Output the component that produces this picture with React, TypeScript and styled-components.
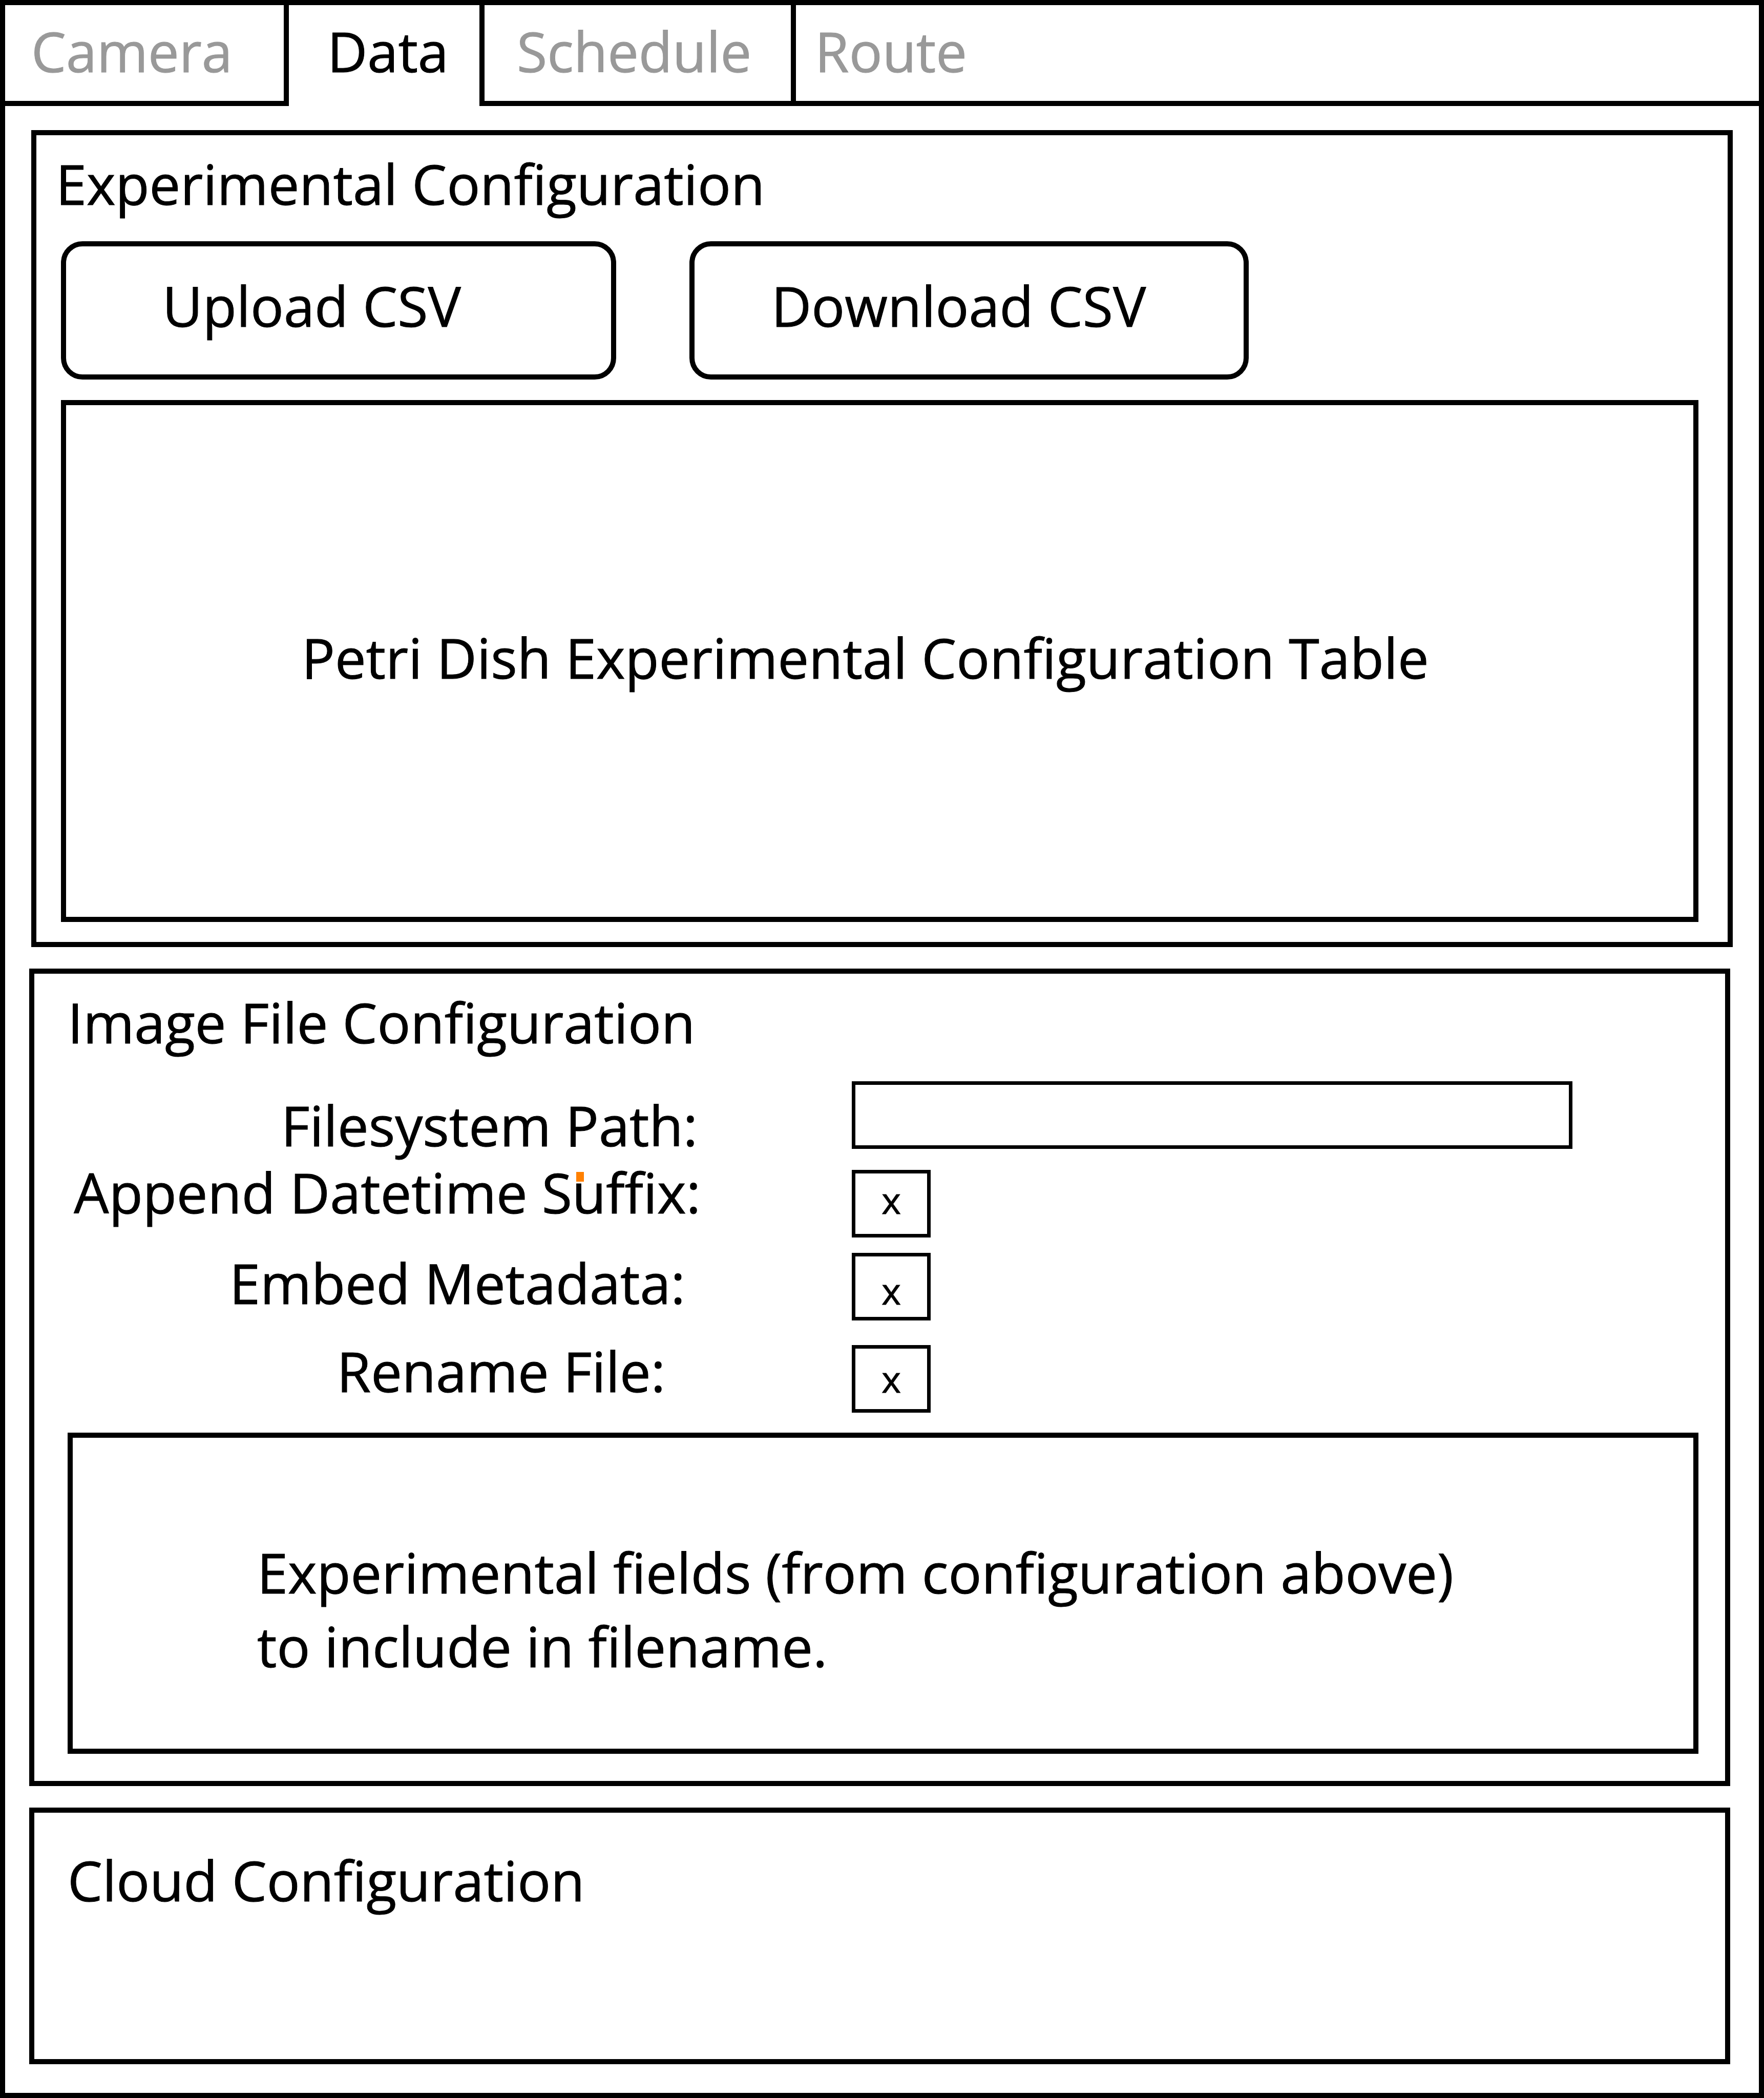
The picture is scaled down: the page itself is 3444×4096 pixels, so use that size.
import React from "react";
import styled, { createGlobalStyle } from "styled-components";

const GlobalStyle = createGlobalStyle`
  *, *::before, *::after { box-sizing: border-box; }
  body { margin: 0; background: #fff; }
  body, button, input {
    font-family: "Open Sans", "Noto Sans", sans-serif;
    font-size: 108px;
    font-weight: 400;
    line-height: 144px;
    color: #000;
    -webkit-text-stroke: 1px currentColor;
  }
`;

const Frame = styled.div`
  display: flex;
  flex-direction: column;
  min-height: 100vh;
  border: 10px solid #000;
`;

const TabBar = styled.nav`
  display: flex;
  height: 197px;
`;

const Tab = styled.button<{ $width?: number; $indent: number; $active?: boolean }>`
  flex: ${(p) => (p.$width ? `0 0 ${p.$width}px` : "1")};
  display: flex;
  align-items: flex-start;
  margin: 0;
  padding: 18px 0 0 ${(p) => p.$indent}px;
  border: 0 solid #000;
  border-right-width: ${(p) => (p.$width ? 10 : 0)}px;
  border-bottom-width: ${(p) => (p.$active ? 0 : 10)}px;
  background: none;
  color: ${(p) => (p.$active ? "#000" : "#999")};
  text-align: left;
`;

const Main = styled.main`
  flex: 1;
  display: flex;
  flex-direction: column;
  gap: 42px;
  padding: 47px 51px 56px;
`;

const Panel = styled.section`
  border: 10px solid #000;
  padding: 23px 57px 39px 48px;
`;

const OffsetPanel = styled(Panel)`
  margin: 0 5px 0 -4px;
  padding: 23px 52px 53px 65px;
`;

const CloudPanel = styled(OffsetPanel)`
  flex: 1;
  padding-top: 60px;
`;

const Title = styled.h2<{ $outdent?: boolean }>`
  margin: 0 0 ${(p) => (p.$outdent ? 40 : 43)}px ${(p) => (p.$outdent ? -10 : 0)}px;
  font-size: 108px;
  font-weight: 400;
  line-height: 144px;
`;

const Actions = styled.div`
  display: flex;
  gap: 143px;
  margin-bottom: 40px;
`;

const ActionButton = styled.button<{ $width: number; $indent: number }>`
  width: ${(p) => p.$width}px;
  height: 270px;
  padding: 0 0 18px ${(p) => p.$indent}px;
  border: 10px solid #000;
  border-radius: 42px;
  background: none;
  text-align: left;
`;

const TableArea = styled.div`
  display: flex;
  align-items: center;
  height: 1019px;
  padding: 0 0 14px 460px;
  border: 10px solid #000;
`;

const FieldsArea = styled.div`
  height: 627px;
  padding: 191px 0 0 360px;
  border: 10px solid #000;
`;

const FieldRow = styled.div<{ $gap: number }>`
  display: grid;
  grid-template-columns: 1531px 1fr;
  align-items: start;
  height: 132px;
  margin: 0 246px ${(p) => p.$gap}px 0;
`;

const FieldLabel = styled.label<{ $drop: number; $inset: number }>`
  padding: ${(p) => p.$drop}px ${(p) => p.$inset}px 0 0;
  line-height: 88px;
  text-align: right;
  white-space: nowrap;
`;

const PathInput = styled.input`
  width: 100%;
  height: 132px;
  margin: 0;
  padding: 0 24px;
  border: 7px solid #000;
  border-radius: 0;
  background: none;
  font-size: 72px;
`;

const CheckCell = styled.span`
  display: grid;
  width: 154px;
  height: 132px;
  > * { grid-area: 1 / 1; }
`;

const CheckInput = styled.input`
  appearance: none;
  width: 154px;
  height: 132px;
  margin: 0;
  border: 7px solid #000;
`;

const CheckMark = styled.span<{ $drop: number }>`
  padding-top: ${(p) => p.$drop}px;
  font-size: 72px;
  line-height: 116px;
  text-align: center;
  pointer-events: none;
  visibility: hidden;
  input:checked + & { visibility: visible; }
`;

const Flagged = styled.span`
  position: relative;
  &::after {
    content: "";
    position: absolute;
    left: 8px;
    top: 34px;
    width: 15px;
    height: 19px;
    background: #ff8000;
  }
`;

type CheckFieldProps = {
  id: string;
  gap: number;
  drop: number;
  inset: number;
  children: React.ReactNode;
};

function CheckField({ id, gap, drop, inset, children }: CheckFieldProps) {
  return (
    <FieldRow $gap={gap}>
      <FieldLabel htmlFor={id} $drop={drop} $inset={inset}>{children}</FieldLabel>
      <CheckCell>
        <CheckInput id={id} type="checkbox" defaultChecked />
        <CheckMark $drop={drop} aria-hidden="true">x</CheckMark>
      </CheckCell>
    </FieldRow>
  );
}

export default function App() {
  return (
    <>
      <GlobalStyle />
      <Frame>
        <TabBar>
          <Tab type="button" $width={554} $indent={51}>Camera</Tab>
          <Tab type="button" $width={382} $indent={75} $active aria-current="page">Data</Tab>
          <Tab type="button" $width={608} $indent={63}>Schedule</Tab>
          <Tab type="button" $indent={37}>Route</Tab>
        </TabBar>
        <Main>
          <Panel>
            <Title $outdent>Experimental Configuration</Title>
            <Actions>
              <ActionButton type="button" $width={1084} $indent={188}>Upload CSV</ActionButton>
              <ActionButton type="button" $width={1092} $indent={150}>Download CSV</ActionButton>
            </Actions>
            <TableArea>Petri Dish Experimental Configuration Table</TableArea>
          </Panel>

          <OffsetPanel>
            <Title>Image File Configuration</Title>
            <FieldRow $gap={41}>
              <FieldLabel htmlFor="path" $drop={42} $inset={301}>Filesystem Path:</FieldLabel>
              <PathInput id="path" type="text" />
            </FieldRow>
            <CheckField id="suffix" gap={30} drop={0} inset={295}>
              Append Datetime S<Flagged>u</Flagged>ffix:
            </CheckField>
            <CheckField id="metadata" gap={48} drop={15} inset={325}>Embed Metadata:</CheckField>
            <CheckField id="rename" gap={39} drop={7} inset={364}>Rename File:</CheckField>
            <FieldsArea>
              Experimental fields (from configuration above)
              <br />
              to include in filename.
            </FieldsArea>
          </OffsetPanel>

          <CloudPanel>
            <Title>Cloud Configuration</Title>
          </CloudPanel>
        </Main>
      </Frame>
    </>
  );
}
